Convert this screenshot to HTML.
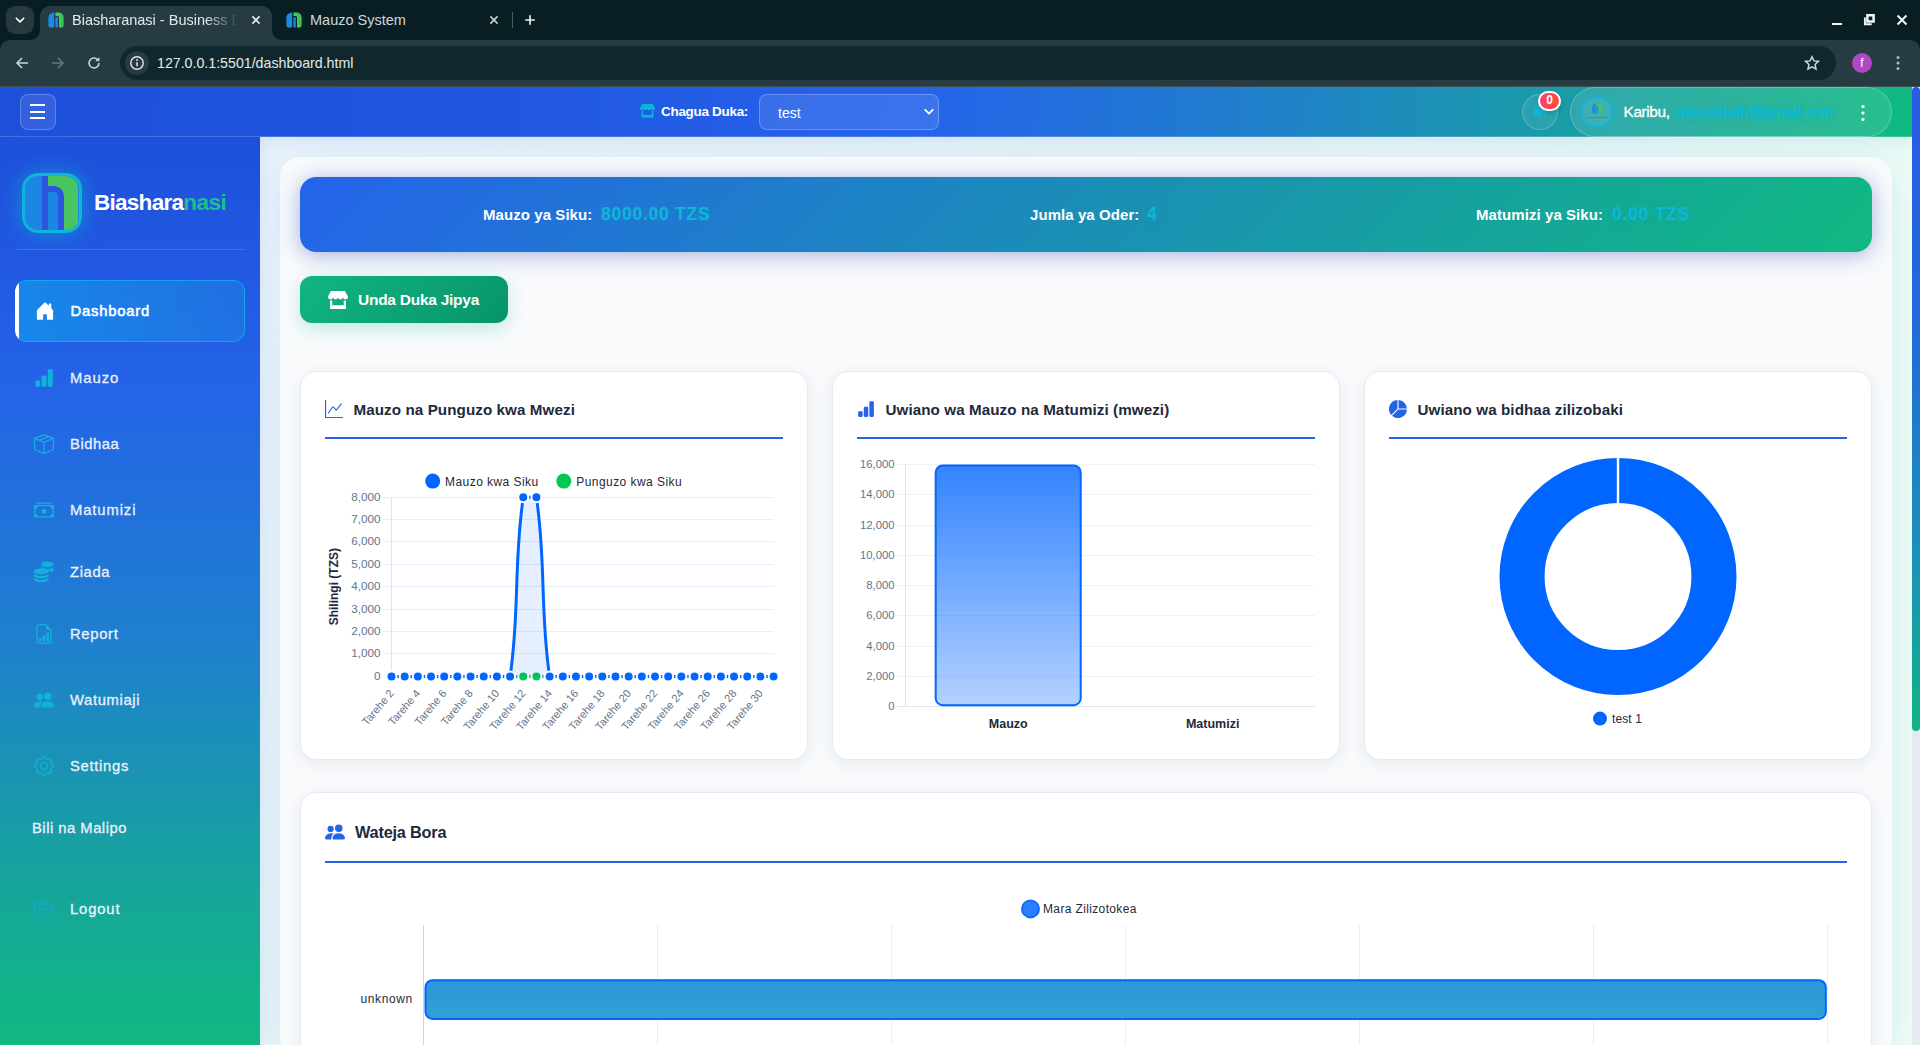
<!DOCTYPE html>
<html lang="sw">
<head>
<meta charset="utf-8">
<title>Biasharanasi - Business Dashboard</title>
<style>
*{box-sizing:border-box;margin:0;padding:0}
html,body{width:1920px;height:1045px;overflow:hidden;background:#0a1f24;font-family:"Liberation Sans",sans-serif}
.abs{position:absolute}
svg{display:block}
/* ---------- browser chrome ---------- */
#chrome{position:absolute;left:0;top:0;width:1920px;height:87px;background:#091e23;color:#dfe6e8;font-family:"Liberation Sans",sans-serif}
#toolbar{position:absolute;left:0;top:40px;width:1920px;height:46px;background:#263c42;border-radius:10px 10px 0 0}
#tbline{position:absolute;left:0;top:86px;width:1920px;height:1px;background:#3c4f54}
#tabsearch{position:absolute;left:6px;top:6px;width:28px;height:28px;border-radius:9px;background:#263a40}
#tab1{position:absolute;left:40px;top:6px;width:232px;height:35px;background:#263c42;border-radius:10px 10px 0 0}
#tab1:before,#tab1:after{content:"";position:absolute;bottom:1px;width:10px;height:10px;background:radial-gradient(circle at 0 0,rgba(0,0,0,0) 9.5px,#263c42 10.5px)}
#tab1:before{left:-10px}
#tab1:after{right:-10px;background:radial-gradient(circle at 100% 0,rgba(0,0,0,0) 9.5px,#263c42 10.5px)}
.tabtitle{position:absolute;top:12px;font-size:14.5px;white-space:nowrap;color:#e3e9ea;line-height:16px}
#urlbox{position:absolute;left:120px;top:46px;width:1716px;height:34px;border-radius:17px;background:#10282d}
#urlinfo{position:absolute;left:125px;top:51px;width:24px;height:24px;border-radius:12px;background:#263c42}
#url{position:absolute;left:157px;top:54px;font-size:14.2px;line-height:18px;color:#e3e9ea;white-space:nowrap}
/* ---------- page ---------- */
#page{position:absolute;left:0;top:87px;width:1912px;height:958px;overflow:hidden;background:linear-gradient(135deg,#eff5fe 0%,#eaf6f6 38%,#ebfcf4 66%,#ebfcf4 100%);font-family:"Liberation Sans",sans-serif;color:#1e293b}
#scroll{position:absolute;left:1912px;top:87px;width:8px;height:958px;background:#e6eaf3}
#thumb{position:absolute;left:0;top:0;width:8px;height:644px;border-radius:4px;background:linear-gradient(180deg,#2a5be6 0%,#2268dc 35%,#1b93b6 75%,#12b384 100%)}
#header{position:absolute;left:0;top:0;width:1912px;height:50px;background:linear-gradient(92deg,#1e4fda 0%,#2056e0 25%,#2563eb 48%,#1f83c6 68%,#18a39f 85%,#10b981 100%);border-bottom:1px solid rgba(255,255,255,.18);box-shadow:0 4px 18px rgba(37,99,235,.13)}
#sidebar{position:absolute;left:0;top:50px;width:260px;height:908px;background:linear-gradient(180deg,#1e50da 0%,#2157e1 12%,#2463e8 27%,#1f7fcf 55%,#17a29f 80%,#10b981 100%);box-shadow:4px 0 20px rgba(37,99,235,.11)}
#main{position:absolute;left:280px;top:70px;width:1612px;height:900px;border-radius:20px;background:#f8fafc;box-shadow:0 0 30px rgba(37,99,235,.10)}
.card{position:absolute;background:#fff;border:1px solid #e6ebf2;border-radius:16px;box-shadow:0 4px 18px rgba(30,41,80,.07)}
.ctitle{position:absolute;font-size:15.2px;font-weight:700;color:#1e293b;white-space:nowrap;line-height:20px;letter-spacing:.08px}
.cline{position:absolute;height:2px;background:#2563eb}
.nav{position:absolute;left:70px;font-size:14.8px;font-weight:400;-webkit-text-stroke:.3px #eaf1ff;color:#eaf1ff;white-space:nowrap;line-height:20px;letter-spacing:.3px}
.nico{position:absolute;left:34px;width:20px;height:20px;fill:#10b3d8}
.stl{font-size:15px;font-weight:700;color:#fff;line-height:20px;white-space:nowrap;letter-spacing:.07px}
.stv{font-size:17.5px;font-weight:700;color:#10b6d8;line-height:22px;white-space:nowrap;letter-spacing:.75px;text-shadow:0 0 10px rgba(6,182,212,.35)}
</style>
</head>
<body>
<!-- ================= BROWSER CHROME ================= -->
<div id="chrome">
  <div id="tabsearch"></div>
  <div id="tab1"></div>
  <div id="toolbar"></div>
  <div id="tbline"></div>
  <div id="urlbox"></div>
  <div id="urlinfo"></div>
  <div class="tabtitle" style="left:72px;width:166px;overflow:hidden;-webkit-mask-image:linear-gradient(90deg,#000 80%,transparent 100%);mask-image:linear-gradient(90deg,#000 80%,transparent 100%)">Biasharanasi - Business Dashboard</div>
  <div class="tabtitle" style="left:310px;color:#cdd7d9">Mauzo System</div>
  <div id="url">127.0.0.1:5501/dashboard.html</div>
  
  <svg class="abs" style="left:14px;top:15px" width="12" height="10" viewBox="0 0 12 10"><path d="M2.300 3.200l3.700 3.700 3.700-3.700" fill="none" stroke="#fff" stroke-width="1.6" stroke-linecap="round" stroke-linejoin="round"/></svg>
  <svg class="abs" style="left:48px;top:12px" width="16" height="16" viewBox="0 0 16 16"><path d="M6.2 0.6C3 0.6 0.4 2.9 0.4 6v7.2c0 1.4 1.2 2.4 2.6 2.4h3.2z" fill="#1b8ae3"/><path d="M7.4 5.2h2.4v10.4H8.9c-0.9 0-1.5-.6-1.5-1.4z" fill="#1b8ae3"/><path d="M7.4 0.6h3.2c2.9 0 5 2.2 5 5v7.6c0 1.4-1 2.4-2.4 2.4H11V5.6c0-.9-.6-1.6-1.5-1.6H7.4z" fill="#3dcb5c"/><path d="M10.6 2.2c1.9 0 3.3 1.4 3.3 3.3v10" fill="none" stroke="#2fb44d" stroke-width=".7"/></svg>
  <svg class="abs" style="left:286px;top:12px" width="16" height="16" viewBox="0 0 16 16"><path d="M6.2 0.6C3 0.6 0.4 2.9 0.4 6v7.2c0 1.4 1.2 2.4 2.6 2.4h3.2z" fill="#1b8ae3"/><path d="M7.4 5.2h2.4v10.4H8.9c-0.9 0-1.5-.6-1.5-1.4z" fill="#1b8ae3"/><path d="M7.4 0.6h3.2c2.9 0 5 2.2 5 5v7.6c0 1.4-1 2.4-2.4 2.4H11V5.6c0-.9-.6-1.6-1.5-1.6H7.4z" fill="#3dcb5c"/><path d="M10.6 2.2c1.9 0 3.3 1.4 3.3 3.3v10" fill="none" stroke="#2fb44d" stroke-width=".7"/></svg>
  <svg class="abs" style="left:250.300px;top:14px" width="12" height="12" viewBox="0 0 12 12"><path d="M3 3l6 6M9 3l-6 6" stroke="#e8eef0" stroke-width="1.7" stroke-linecap="square"/></svg>
  <svg class="abs" style="left:487.800px;top:14px" width="12" height="12" viewBox="0 0 12 12"><path d="M3 3l6 6M9 3l-6 6" stroke="#cfd9dc" stroke-width="1.6" stroke-linecap="square"/></svg>
  <div class="abs" style="left:512px;top:12px;width:1px;height:16px;background:#4a5d62"></div>
  <svg class="abs" style="left:523px;top:13px" width="14" height="14" viewBox="0 0 14 14"><path d="M7 2.200v9.600M2.200 7h9.600" stroke="#e8eef0" stroke-width="1.7"/></svg>
  <!-- back / forward / reload -->
  <svg class="abs" style="left:14px;top:55px" width="16" height="16" viewBox="0 0 16 16"><path d="M14 8H3M8 3L3 8l5 5" fill="none" stroke="#c3d7dc" stroke-width="1.6" stroke-linejoin="miter"/></svg>
  <svg class="abs" style="left:50px;top:55px" width="16" height="16" viewBox="0 0 16 16"><path d="M2 8h11M8 3l5 5-5 5" fill="none" stroke="#61797f" stroke-width="1.6"/></svg>
  <svg class="abs" style="left:86px;top:55px" width="16" height="16" viewBox="0 0 16 16"><path d="M13 8a5 5 0 1 1-1.6-3.7" fill="none" stroke="#c3d7dc" stroke-width="1.6"/><path d="M13.4 2v4.2H9.2z" fill="#c3d7dc"/></svg>
  <svg class="abs" style="left:129px;top:55px" width="16" height="16" viewBox="0 0 16 16"><circle cx="8" cy="8" r="6.2" fill="none" stroke="#e3e9ea" stroke-width="1.4"/><path d="M8 7.2v4" stroke="#e3e9ea" stroke-width="1.5"/><circle cx="8" cy="5" r=".95" fill="#e3e9ea"/></svg>
  <!-- star / avatar / menu -->
  <svg class="abs" style="left:1803px;top:54px" width="18" height="18" viewBox="0 0 24 24"><path d="M12 3.6l2.6 5.6 6 .7-4.5 4.1 1.2 6L12 17l-5.3 3 1.2-6-4.5-4.100 6-.7z" fill="none" stroke="#c3d7dc" stroke-width="2" stroke-linejoin="miter"/></svg>
  <div class="abs" style="left:1852px;top:53px;width:20px;height:20px;border-radius:10px;background:#ae48c4;color:#fff;font-size:12px;line-height:20px;text-align:center">f</div>
  <svg class="abs" style="left:1894px;top:54px" width="8" height="18" viewBox="0 0 8 18"><circle cx="4" cy="3.5" r="1.5" fill="#a5bfc5"/><circle cx="4" cy="9" r="1.5" fill="#a5bfc5"/><circle cx="4" cy="14.600" r="1.5" fill="#a5bfc5"/></svg>
  <!-- window controls -->
  <div class="abs" style="left:1832px;top:23px;width:10px;height:2px;background:#f1f5f6"></div>
  <svg class="abs" style="left:1863px;top:14px" width="12" height="12" viewBox="0 0 12 12"><path d="M4.4 1.3h6.200v6.200H4.4z" fill="none" stroke="#f1f5f6" stroke-width="2.500"/><path d="M1.900 3.400v6.800h6.800" fill="none" stroke="#f1f5f6" stroke-width="1.9"/></svg>
  <svg class="abs" style="left:1896px;top:14px" width="12" height="12" viewBox="0 0 12 12"><path d="M1.5 1.5l9 9M10.5 1.5l-9 9" stroke="#f1f5f6" stroke-width="2"/></svg>

</div>

<!-- ================= PAGE ================= -->
<div id="page">
  <div id="main">
    
    <!-- stats bar (coords relative to #main: page x-280, y-157) -->
    <div class="abs" style="left:20px;top:20px;width:1572px;height:75px;border-radius:16px;background:linear-gradient(135deg,#2563eb 0%,#10b981 100%);box-shadow:0 3px 22px rgba(30,64,175,.385)"></div>
    <div class="stl abs" style="left:203px;top:48px">Mauzo ya Siku:</div><div class="stv abs" style="left:321px;top:46px">8000.00 TZS</div>
    <div class="stl abs" style="left:750px;top:48px">Jumla ya Oder:</div><div class="stv abs" style="left:867px;top:46px">4</div>
    <div class="stl abs" style="left:1196px;top:48px">Matumizi ya Siku:</div><div class="stv abs" style="left:1332px;top:46px">0.00 TZS</div>
    <!-- button -->
    <div class="abs" style="left:20px;top:119px;width:208px;height:47px;border-radius:12px;background:linear-gradient(135deg,#12b584 0%,#079467 100%);box-shadow:0 6px 18px rgba(16,185,129,.24)"></div>
    <svg class="abs" style="left:48px;top:133.700px;fill:#fff" width="20" height="18.400" viewBox="0 0 20 18.400"><path d="M2.800 0H16.900L20 5.600v.700a2.500 2.100 0 0 1-5 0a2.500 2.100 0 0 1-5 0a2.500 2.100 0 0 1-5 0a2.500 2.100 0 0 1-5 0V5.600zM2 9.500h2.250v4.700h11.500V9.500H18v7.400a1.500 1.500 0 0 1-1.500 1.500h-13A1.500 1.500 0 0 1 2 16.900z"/></svg>
    <div class="abs" style="left:78px;top:133px;font-size:15.500px;font-weight:700;color:#fff;line-height:20px;white-space:nowrap;letter-spacing:-.26px">Unda Duka Jipya</div>
    <div class="card" style="left:20.0px;top:214px;width:508px;height:389px"></div>
    <svg class="abs" style="left:45.0px;top:243px;fill:#2563eb" width="18" height="18" viewBox="0 0 16 16"><path fill-rule="evenodd" d="M0 0h1v15h15v1H0zm14.817 3.113a.500.500 0 0 1 .070.704l-4.500 5.500a.500.500 0 0 1-.740.037L7.060 6.767l-3.656 5.027a.500.500 0 0 1-.808-.588l4-5.500a.500.500 0 0 1 .758-.060l2.609 2.610 4.150-5.073a.500.500 0 0 1 .704-.070"/></svg>
    <div class="ctitle" style="left:73.5px;top:243.1px">Mauzo na Punguzo kwa Mwezi</div>
    <div class="cline" style="left:45.0px;top:280px;width:458px"></div>
    <div class="card" style="left:552.0px;top:214px;width:508px;height:389px"></div>
    <svg class="abs" style="left:577.0px;top:243px;fill:#2563eb" width="18" height="18" viewBox="0 0 16 16"><path d="M1 11a1 1 0 0 1 1-1h2a1 1 0 0 1 1 1v3a1 1 0 0 1-1 1H2a1 1 0 0 1-1-1zm5-4a1 1 0 0 1 1-1h2a1 1 0 0 1 1 1v7a1 1 0 0 1-1 1H7a1 1 0 0 1-1-1zm5-5a1 1 0 0 1 1-1h2a1 1 0 0 1 1 1v12a1 1 0 0 1-1 1h-2a1 1 0 0 1-1-1z"/></svg>
    <div class="ctitle" style="left:605.5px;top:243.1px">Uwiano wa Mauzo na Matumizi (mwezi)</div>
    <div class="cline" style="left:577.0px;top:280px;width:458px"></div>
    <div class="card" style="left:1084.0px;top:214px;width:508px;height:389px"></div>
    <svg class="abs" style="left:1109.0px;top:243px;fill:#2563eb" width="18" height="18" viewBox="0 0 16 16"><path d="M15.985 8.500H8.207l-5.500 5.500a8 8 0 0 0 13.277-5.500zM2 13.292A8 8 0 0 1 7.500.015v7.778zM8.500.015V7.500h7.485A8 8 0 0 0 8.500.015"/></svg>
    <div class="ctitle" style="left:1137.5px;top:243.1px">Uwiano wa bidhaa zilizobaki</div>
    <div class="cline" style="left:1109.0px;top:280px;width:458px"></div>
    <div class="card" style="left:20.0px;top:635.0px;width:1572px;height:300px"></div>
    <svg class="abs" style="left:45.0px;top:665px;fill:#2563eb" width="20" height="20" viewBox="0 0 16 16"><path d="M7 14s-1 0-1-1 1-4 5-4 5 3 5 4-1 1-1 1zm4-6a3 3 0 1 0 0-6 3 3 0 0 0 0 6m-5.784 6A2.240 2.240 0 0 1 5 13c0-1.355.680-2.750 1.936-3.720A6.300 6.300 0 0 0 5 9c-4 0-5 3-5 4s1 1 1 1zM4.500 8a2.500 2.500 0 1 0 0-5 2.500 2.500 0 0 0 0 5"/></svg>
    <div class="ctitle" style="left:75.0px;top:665px;font-size:16.3px;letter-spacing:-.2px">Wateja Bora</div>
    <div class="cline" style="left:45.0px;top:704.0px;width:1522px"></div>
    <svg class="abs" style="left:-280px;top:-157px;font-family:'Liberation Sans',sans-serif" width="1920" height="1045" viewBox="0 0 1920 1045">
<defs><linearGradient id="gbar" x1="0" y1="0" x2="0" y2="1"><stop offset="0" stop-color="#0066ff" stop-opacity=".8"/><stop offset="1" stop-color="#0066ff" stop-opacity=".3"/></linearGradient>
<linearGradient id="gh" x1="0" y1="0" x2="0" y2="1"><stop offset="0" stop-color="#2d96d9"/><stop offset="1" stop-color="#30a1d1"/></linearGradient></defs>
<g id="c1">
<path d="M383.500 676.50 H774.10" stroke="#e4eeff" stroke-width="1" fill="none"/>
<path d="M383.500 653.50 H774.10" stroke="#e4eeff" stroke-width="1" fill="none"/>
<path d="M383.500 631.50 H774.10" stroke="#e4eeff" stroke-width="1" fill="none"/>
<path d="M383.500 609.50 H774.10" stroke="#e4eeff" stroke-width="1" fill="none"/>
<path d="M383.500 586.50 H774.10" stroke="#e4eeff" stroke-width="1" fill="none"/>
<path d="M383.500 564.50 H774.10" stroke="#e4eeff" stroke-width="1" fill="none"/>
<path d="M383.500 541.50 H774.10" stroke="#e4eeff" stroke-width="1" fill="none"/>
<path d="M383.500 519.50 H774.10" stroke="#e4eeff" stroke-width="1" fill="none"/>
<path d="M383.500 497.50 H774.10" stroke="#e4eeff" stroke-width="1" fill="none"/>
<path d="M391.50 497.05 V676.30" stroke="#e3e4e8" stroke-width="1"/>
<text x="380.500" y="679.80" font-size="11.700" fill="#64748b" text-anchor="end">0</text>
<text x="380.500" y="657.39" font-size="11.700" fill="#64748b" text-anchor="end">1,000</text>
<text x="380.500" y="634.99" font-size="11.700" fill="#64748b" text-anchor="end">2,000</text>
<text x="380.500" y="612.58" font-size="11.700" fill="#64748b" text-anchor="end">3,000</text>
<text x="380.500" y="590.17" font-size="11.700" fill="#64748b" text-anchor="end">4,000</text>
<text x="380.500" y="567.77" font-size="11.700" fill="#64748b" text-anchor="end">5,000</text>
<text x="380.500" y="545.36" font-size="11.700" fill="#64748b" text-anchor="end">6,000</text>
<text x="380.500" y="522.96" font-size="11.700" fill="#64748b" text-anchor="end">7,000</text>
<text x="380.500" y="500.55" font-size="11.700" fill="#64748b" text-anchor="end">8,000</text>
<text transform="translate(338.100 586.700) rotate(-90)" font-size="12" font-weight="700" fill="#1e293b" text-anchor="middle">Shilingi (TZS)</text>
<path d="M391.50 676.60 C396.77 676.60 399.41 676.60 404.68 676.60 C409.95 676.60 412.58 676.60 417.85 676.60 C423.12 676.60 425.76 676.60 431.03 676.60 C436.30 676.60 438.93 676.60 444.20 676.60 C449.47 676.60 452.11 676.60 457.38 676.60 C462.65 676.60 465.28 676.60 470.56 676.60 C475.83 676.60 478.46 676.60 483.73 676.60 C489.00 676.60 491.64 676.60 496.91 676.60 C502.18 676.60 504.81 676.60 510.08 676.60 C515.35 676.60 517.99 676.60 523.26 676.60 C528.53 676.60 531.16 676.60 536.43 676.60 C541.70 676.60 544.34 676.60 549.61 676.60 C554.88 676.60 557.52 676.60 562.79 676.60 C568.06 676.60 570.69 676.60 575.96 676.60 C581.23 676.60 583.87 676.60 589.14 676.60 C594.41 676.60 597.04 676.60 602.31 676.60 C607.58 676.60 610.22 676.60 615.49 676.60 C620.76 676.60 623.40 676.60 628.67 676.60 C633.94 676.60 636.57 676.60 641.84 676.60 C647.11 676.60 649.75 676.60 655.02 676.60 C660.29 676.60 662.92 676.60 668.19 676.60 C673.46 676.60 676.10 676.60 681.37 676.60 C686.64 676.60 689.27 676.60 694.54 676.60 C699.82 676.60 702.45 676.60 707.72 676.60 C712.99 676.60 715.63 676.60 720.90 676.60 C726.17 676.60 728.80 676.60 734.07 676.60 C739.34 676.60 741.98 676.60 747.25 676.60 C752.52 676.60 755.15 676.60 760.42 676.60 C765.69 676.60 768.33 676.60 773.60 676.60" fill="none" stroke="#00c851" stroke-width="3"/>
<circle cx="391.50" cy="676.60" r="5" fill="#00c851" stroke="#fff" stroke-width="2"/>
<circle cx="404.68" cy="676.60" r="5" fill="#00c851" stroke="#fff" stroke-width="2"/>
<circle cx="417.85" cy="676.60" r="5" fill="#00c851" stroke="#fff" stroke-width="2"/>
<circle cx="431.03" cy="676.60" r="5" fill="#00c851" stroke="#fff" stroke-width="2"/>
<circle cx="444.20" cy="676.60" r="5" fill="#00c851" stroke="#fff" stroke-width="2"/>
<circle cx="457.38" cy="676.60" r="5" fill="#00c851" stroke="#fff" stroke-width="2"/>
<circle cx="470.56" cy="676.60" r="5" fill="#00c851" stroke="#fff" stroke-width="2"/>
<circle cx="483.73" cy="676.60" r="5" fill="#00c851" stroke="#fff" stroke-width="2"/>
<circle cx="496.91" cy="676.60" r="5" fill="#00c851" stroke="#fff" stroke-width="2"/>
<circle cx="510.08" cy="676.60" r="5" fill="#00c851" stroke="#fff" stroke-width="2"/>
<circle cx="523.26" cy="676.60" r="5" fill="#00c851" stroke="#fff" stroke-width="2"/>
<circle cx="536.43" cy="676.60" r="5" fill="#00c851" stroke="#fff" stroke-width="2"/>
<circle cx="549.61" cy="676.60" r="5" fill="#00c851" stroke="#fff" stroke-width="2"/>
<circle cx="562.79" cy="676.60" r="5" fill="#00c851" stroke="#fff" stroke-width="2"/>
<circle cx="575.96" cy="676.60" r="5" fill="#00c851" stroke="#fff" stroke-width="2"/>
<circle cx="589.14" cy="676.60" r="5" fill="#00c851" stroke="#fff" stroke-width="2"/>
<circle cx="602.31" cy="676.60" r="5" fill="#00c851" stroke="#fff" stroke-width="2"/>
<circle cx="615.49" cy="676.60" r="5" fill="#00c851" stroke="#fff" stroke-width="2"/>
<circle cx="628.67" cy="676.60" r="5" fill="#00c851" stroke="#fff" stroke-width="2"/>
<circle cx="641.84" cy="676.60" r="5" fill="#00c851" stroke="#fff" stroke-width="2"/>
<circle cx="655.02" cy="676.60" r="5" fill="#00c851" stroke="#fff" stroke-width="2"/>
<circle cx="668.19" cy="676.60" r="5" fill="#00c851" stroke="#fff" stroke-width="2"/>
<circle cx="681.37" cy="676.60" r="5" fill="#00c851" stroke="#fff" stroke-width="2"/>
<circle cx="694.54" cy="676.60" r="5" fill="#00c851" stroke="#fff" stroke-width="2"/>
<circle cx="707.72" cy="676.60" r="5" fill="#00c851" stroke="#fff" stroke-width="2"/>
<circle cx="720.90" cy="676.60" r="5" fill="#00c851" stroke="#fff" stroke-width="2"/>
<circle cx="734.07" cy="676.60" r="5" fill="#00c851" stroke="#fff" stroke-width="2"/>
<circle cx="747.25" cy="676.60" r="5" fill="#00c851" stroke="#fff" stroke-width="2"/>
<circle cx="760.42" cy="676.60" r="5" fill="#00c851" stroke="#fff" stroke-width="2"/>
<circle cx="773.60" cy="676.60" r="5" fill="#00c851" stroke="#fff" stroke-width="2"/>
<path d="M391.50 676.60 C396.77 676.60 399.41 676.60 404.68 676.60 C409.95 676.60 412.58 676.60 417.85 676.60 C423.12 676.60 425.76 676.60 431.03 676.60 C436.30 676.60 438.93 676.60 444.20 676.60 C449.47 676.60 452.11 676.60 457.38 676.60 C462.65 676.60 465.28 676.60 470.56 676.60 C475.83 676.60 478.46 676.60 483.73 676.60 C489.00 676.60 491.64 676.60 496.91 676.60 C502.18 676.60 509.36 676.60 510.08 676.60 C519.90 609.78 513.44 564.12 523.26 497.30 C523.98 497.30 535.71 497.30 536.43 497.30 C546.26 564.12 539.79 609.78 549.61 676.60 C550.33 676.60 557.52 676.60 562.79 676.60 C568.06 676.60 570.69 676.60 575.96 676.60 C581.23 676.60 583.87 676.60 589.14 676.60 C594.41 676.60 597.04 676.60 602.31 676.60 C607.58 676.60 610.22 676.60 615.49 676.60 C620.76 676.60 623.40 676.60 628.67 676.60 C633.94 676.60 636.57 676.60 641.84 676.60 C647.11 676.60 649.75 676.60 655.02 676.60 C660.29 676.60 662.92 676.60 668.19 676.60 C673.46 676.60 676.10 676.60 681.37 676.60 C686.64 676.60 689.27 676.60 694.54 676.60 C699.82 676.60 702.45 676.60 707.72 676.60 C712.99 676.60 715.63 676.60 720.90 676.60 C726.17 676.60 728.80 676.60 734.07 676.60 C739.34 676.60 741.98 676.60 747.25 676.60 C752.52 676.60 755.15 676.60 760.42 676.60 C765.69 676.60 768.33 676.60 773.60 676.60 L773.60 676.60 L391.50 676.60 Z" fill="#0066ff" fill-opacity=".1" stroke="none"/>
<path d="M391.50 676.60 C396.77 676.60 399.41 676.60 404.68 676.60 C409.95 676.60 412.58 676.60 417.85 676.60 C423.12 676.60 425.76 676.60 431.03 676.60 C436.30 676.60 438.93 676.60 444.20 676.60 C449.47 676.60 452.11 676.60 457.38 676.60 C462.65 676.60 465.28 676.60 470.56 676.60 C475.83 676.60 478.46 676.60 483.73 676.60 C489.00 676.60 491.64 676.60 496.91 676.60 C502.18 676.60 509.36 676.60 510.08 676.60 C519.90 609.78 513.44 564.12 523.26 497.30 C523.98 497.30 535.71 497.30 536.43 497.30 C546.26 564.12 539.79 609.78 549.61 676.60 C550.33 676.60 557.52 676.60 562.79 676.60 C568.06 676.60 570.69 676.60 575.96 676.60 C581.23 676.60 583.87 676.60 589.14 676.60 C594.41 676.60 597.04 676.60 602.31 676.60 C607.58 676.60 610.22 676.60 615.49 676.60 C620.76 676.60 623.40 676.60 628.67 676.60 C633.94 676.60 636.57 676.60 641.84 676.60 C647.11 676.60 649.75 676.60 655.02 676.60 C660.29 676.60 662.92 676.60 668.19 676.60 C673.46 676.60 676.10 676.60 681.37 676.60 C686.64 676.60 689.27 676.60 694.54 676.60 C699.82 676.60 702.45 676.60 707.72 676.60 C712.99 676.60 715.63 676.60 720.90 676.60 C726.17 676.60 728.80 676.60 734.07 676.60 C739.34 676.60 741.98 676.60 747.25 676.60 C752.52 676.60 755.15 676.60 760.42 676.60 C765.69 676.60 768.33 676.60 773.60 676.60" fill="none" stroke="#0066ff" stroke-width="3"/>
<circle cx="391.50" cy="676.60" r="5" fill="#0066ff" stroke="#fff" stroke-width="2"/>
<circle cx="404.68" cy="676.60" r="5" fill="#0066ff" stroke="#fff" stroke-width="2"/>
<circle cx="417.85" cy="676.60" r="5" fill="#0066ff" stroke="#fff" stroke-width="2"/>
<circle cx="431.03" cy="676.60" r="5" fill="#0066ff" stroke="#fff" stroke-width="2"/>
<circle cx="444.20" cy="676.60" r="5" fill="#0066ff" stroke="#fff" stroke-width="2"/>
<circle cx="457.38" cy="676.60" r="5" fill="#0066ff" stroke="#fff" stroke-width="2"/>
<circle cx="470.56" cy="676.60" r="5" fill="#0066ff" stroke="#fff" stroke-width="2"/>
<circle cx="483.73" cy="676.60" r="5" fill="#0066ff" stroke="#fff" stroke-width="2"/>
<circle cx="496.91" cy="676.60" r="5" fill="#0066ff" stroke="#fff" stroke-width="2"/>
<circle cx="510.08" cy="676.60" r="5" fill="#0066ff" stroke="#fff" stroke-width="2"/>
<circle cx="523.26" cy="497.30" r="5" fill="#0066ff" stroke="#fff" stroke-width="2"/>
<circle cx="536.43" cy="497.30" r="5" fill="#0066ff" stroke="#fff" stroke-width="2"/>
<circle cx="549.61" cy="676.60" r="5" fill="#0066ff" stroke="#fff" stroke-width="2"/>
<circle cx="562.79" cy="676.60" r="5" fill="#0066ff" stroke="#fff" stroke-width="2"/>
<circle cx="575.96" cy="676.60" r="5" fill="#0066ff" stroke="#fff" stroke-width="2"/>
<circle cx="589.14" cy="676.60" r="5" fill="#0066ff" stroke="#fff" stroke-width="2"/>
<circle cx="602.31" cy="676.60" r="5" fill="#0066ff" stroke="#fff" stroke-width="2"/>
<circle cx="615.49" cy="676.60" r="5" fill="#0066ff" stroke="#fff" stroke-width="2"/>
<circle cx="628.67" cy="676.60" r="5" fill="#0066ff" stroke="#fff" stroke-width="2"/>
<circle cx="641.84" cy="676.60" r="5" fill="#0066ff" stroke="#fff" stroke-width="2"/>
<circle cx="655.02" cy="676.60" r="5" fill="#0066ff" stroke="#fff" stroke-width="2"/>
<circle cx="668.19" cy="676.60" r="5" fill="#0066ff" stroke="#fff" stroke-width="2"/>
<circle cx="681.37" cy="676.60" r="5" fill="#0066ff" stroke="#fff" stroke-width="2"/>
<circle cx="694.54" cy="676.60" r="5" fill="#0066ff" stroke="#fff" stroke-width="2"/>
<circle cx="707.72" cy="676.60" r="5" fill="#0066ff" stroke="#fff" stroke-width="2"/>
<circle cx="720.90" cy="676.60" r="5" fill="#0066ff" stroke="#fff" stroke-width="2"/>
<circle cx="734.07" cy="676.60" r="5" fill="#0066ff" stroke="#fff" stroke-width="2"/>
<circle cx="747.25" cy="676.60" r="5" fill="#0066ff" stroke="#fff" stroke-width="2"/>
<circle cx="760.42" cy="676.60" r="5" fill="#0066ff" stroke="#fff" stroke-width="2"/>
<circle cx="773.60" cy="676.60" r="5" fill="#0066ff" stroke="#fff" stroke-width="2"/>
<circle cx="432.700" cy="481.100" r="7.500" fill="#0066ff"/><text x="445" y="485.500" font-size="12" letter-spacing=".45" fill="#1e293b">Mauzo kwa Siku</text>
<circle cx="563.800" cy="481.100" r="7.500" fill="#00c851"/><text x="576.200" y="485.500" font-size="12" letter-spacing=".45" fill="#1e293b">Punguzo kwa Siku</text>
<text transform="translate(394.50 693.500) rotate(-50)" font-size="11" fill="#64748b" text-anchor="end">Tarehe 2</text>
<text transform="translate(420.85 693.500) rotate(-50)" font-size="11" fill="#64748b" text-anchor="end">Tarehe 4</text>
<text transform="translate(447.20 693.500) rotate(-50)" font-size="11" fill="#64748b" text-anchor="end">Tarehe 6</text>
<text transform="translate(473.56 693.500) rotate(-50)" font-size="11" fill="#64748b" text-anchor="end">Tarehe 8</text>
<text transform="translate(499.91 693.500) rotate(-50)" font-size="11" fill="#64748b" text-anchor="end">Tarehe 10</text>
<text transform="translate(526.26 693.500) rotate(-50)" font-size="11" fill="#64748b" text-anchor="end">Tarehe 12</text>
<text transform="translate(552.61 693.500) rotate(-50)" font-size="11" fill="#64748b" text-anchor="end">Tarehe 14</text>
<text transform="translate(578.96 693.500) rotate(-50)" font-size="11" fill="#64748b" text-anchor="end">Tarehe 16</text>
<text transform="translate(605.31 693.500) rotate(-50)" font-size="11" fill="#64748b" text-anchor="end">Tarehe 18</text>
<text transform="translate(631.67 693.500) rotate(-50)" font-size="11" fill="#64748b" text-anchor="end">Tarehe 20</text>
<text transform="translate(658.02 693.500) rotate(-50)" font-size="11" fill="#64748b" text-anchor="end">Tarehe 22</text>
<text transform="translate(684.37 693.500) rotate(-50)" font-size="11" fill="#64748b" text-anchor="end">Tarehe 24</text>
<text transform="translate(710.72 693.500) rotate(-50)" font-size="11" fill="#64748b" text-anchor="end">Tarehe 26</text>
<text transform="translate(737.07 693.500) rotate(-50)" font-size="11" fill="#64748b" text-anchor="end">Tarehe 28</text>
<text transform="translate(763.42 693.500) rotate(-50)" font-size="11" fill="#64748b" text-anchor="end">Tarehe 30</text>
</g>
<g id="c2">
<path d="M897.500 706.50 H1315.00" stroke="#dfe6f2" stroke-width="1"/>
<path d="M897.500 676.50 H1315.00" stroke="#edf2fc" stroke-width="1"/>
<path d="M897.500 646.50 H1315.00" stroke="#edf2fc" stroke-width="1"/>
<path d="M897.500 615.50 H1315.00" stroke="#edf2fc" stroke-width="1"/>
<path d="M897.500 585.50 H1315.00" stroke="#edf2fc" stroke-width="1"/>
<path d="M897.500 555.50 H1315.00" stroke="#edf2fc" stroke-width="1"/>
<path d="M897.500 525.50 H1315.00" stroke="#edf2fc" stroke-width="1"/>
<path d="M897.500 494.50 H1315.00" stroke="#edf2fc" stroke-width="1"/>
<path d="M897.500 464.50 H1315.00" stroke="#edf2fc" stroke-width="1"/>
<path d="M905.50 464.60 V706.60" stroke="#e3e4e8" stroke-width="1"/>
<text x="894.500" y="710.20" font-size="11.300" fill="#64748b" text-anchor="end">0</text>
<text x="894.500" y="679.95" font-size="11.300" fill="#64748b" text-anchor="end">2,000</text>
<text x="894.500" y="649.70" font-size="11.300" fill="#64748b" text-anchor="end">4,000</text>
<text x="894.500" y="619.45" font-size="11.300" fill="#64748b" text-anchor="end">6,000</text>
<text x="894.500" y="589.20" font-size="11.300" fill="#64748b" text-anchor="end">8,000</text>
<text x="894.500" y="558.95" font-size="11.300" fill="#64748b" text-anchor="end">10,000</text>
<text x="894.500" y="528.70" font-size="11.300" fill="#64748b" text-anchor="end">12,000</text>
<text x="894.500" y="498.45" font-size="11.300" fill="#64748b" text-anchor="end">14,000</text>
<text x="894.500" y="468.20" font-size="11.300" fill="#64748b" text-anchor="end">16,000</text>
<rect x="935.700" y="465.400" width="145" height="239.800" rx="7" fill="url(#gbar)" stroke="#0066ff" stroke-width="2"/>
<text x="1008.300" y="728" font-size="12.500" font-weight="700" fill="#1e293b" text-anchor="middle">Mauzo</text>
<text x="1212.700" y="728" font-size="12.500" font-weight="700" fill="#1e293b" text-anchor="middle">Matumizi</text>
</g>
<g id="c3">
<circle cx="1618" cy="576.500" r="95.950" fill="none" stroke="#0066ff" stroke-width="45.100"/>
<path d="M1618 456 V505" stroke="#fff" stroke-width="2.400"/>
<circle cx="1600" cy="718.600" r="7" fill="#0066ff"/><text x="1612" y="722.800" font-size="12" letter-spacing=".1" fill="#1e293b">test 1</text>
</g>
<g id="c4">
<path d="M423.50 925 V1045" stroke="#cdd6e2" stroke-width="1"/>
<path d="M657.50 925 V1045" stroke="#e6efff" stroke-width="1"/>
<path d="M891.50 925 V1045" stroke="#e6efff" stroke-width="1"/>
<path d="M1125.50 925 V1045" stroke="#e6efff" stroke-width="1"/>
<path d="M1359.50 925 V1045" stroke="#e6efff" stroke-width="1"/>
<path d="M1593.50 925 V1045" stroke="#e6efff" stroke-width="1"/>
<path d="M1827.50 925 V1045" stroke="#e6efff" stroke-width="1"/>
<rect x="425.500" y="980.200" width="1400.300" height="38.700" rx="7" fill="url(#gh)" stroke="#0066ff" stroke-width="2"/>
<text x="412.800" y="1002.700" font-size="12" letter-spacing=".6" fill="#1e293b" text-anchor="end">unknown</text>
<circle cx="1030.500" cy="908.900" r="8.500" fill="#2b7fff" stroke="#0d6efd" stroke-width="2"/><text x="1043" y="913.100" font-size="12" letter-spacing=".36" fill="#1e293b">Mara Zilizotokea</text>
</g>
</svg>

  </div>
  <div id="sidebar">
    
    <div class="abs" style="left:22px;top:36px;width:60px;height:60px;border-radius:16px;border:3px solid #10b4d6;background:#1c86e4;overflow:hidden;box-shadow:0 0 22px rgba(6,182,212,.6)"><div class="abs" style="left:22.900px;top:0;width:30.500px;height:53.500px;background:#4ac562;border-radius:0 13px 3px 0"></div><div class="abs" style="left:16.900px;top:0;width:6px;height:54px;background:#2a55dc"></div><div class="abs" style="left:22.900px;top:9.600px;width:16.100px;height:45px;background:#1c86e4;border-top:6px solid #2a55dc;border-right:6px solid #2a55dc;border-radius:0 10px 0 0"></div></div>
    <div class="abs" style="left:94px;top:52px;font-size:22.600px;font-weight:700;color:#fff;line-height:27px;white-space:nowrap;letter-spacing:-.78px">Biashara<span style="color:#19c08d;letter-spacing:-.55px">nasi</span></div>
    <div class="abs" style="left:15px;top:112px;width:230px;height:1px;background:rgba(255,255,255,.16)"></div>
    <div class="abs" style="left:15px;top:143px;width:230px;height:62px;border-radius:12px;background:linear-gradient(90deg,rgba(20,150,235,.74),rgba(32,132,224,.5));border:1px solid rgba(20,180,240,.7);"></div><div class="abs" style="left:15px;top:143px;width:230px;height:62px;border-radius:12px;overflow:hidden"><div class="abs" style="left:0;top:0;width:4.200px;height:62px;background:#fff"></div></div>
    <svg class="nico" style="top:164px;left:35px;fill:#fff" viewBox="0 0 16 16"><path d="M6.500 14.500v-3.505c0-.245.250-.495.500-.495h2c.250 0 .500.250.500.500v3.500a.500.500 0 0 0 .500.500h4a.500.500 0 0 0 .500-.500v-7a.500.500 0 0 0-.146-.354L13 5.793V2.500a.500.500 0 0 0-.500-.500h-1a.500.500 0 0 0-.500.500v1.293L8.354 1.146a.500.500 0 0 0-.708 0l-6 6A.500.500 0 0 0 1.500 7.500v7a.500.500 0 0 0 .500.500h4a.500.500 0 0 0 .500-.500"/></svg>
    <div class="nav" style="top:164.25px;left:70.5px;-webkit-text-stroke:.55px #fff;color:#fff;letter-spacing:0.80px">Dashboard</div>
    <svg class="nico" style="top:231px;fill:#10b3d8" viewBox="0 0 16 16"><path d="M1 11a1 1 0 0 1 1-1h2a1 1 0 0 1 1 1v3a1 1 0 0 1-1 1H2a1 1 0 0 1-1-1zm5-4a1 1 0 0 1 1-1h2a1 1 0 0 1 1 1v7a1 1 0 0 1-1 1H7a1 1 0 0 1-1-1zm5-5a1 1 0 0 1 1-1h2a1 1 0 0 1 1 1v12a1 1 0 0 1-1 1h-2a1 1 0 0 1-1-1z"/></svg>
    <div class="nav" style="top:231.25px;left:70px;letter-spacing:0.95px">Mauzo</div>
    <svg class="nico" style="top:297px;fill:#10b3d8" viewBox="0 0 16 16"><path d="M8.186 1.113a.500.500 0 0 0-.372 0L1.846 3.500l2.404.961L10.404 2zm3.564 1.426L5.596 5 8 5.961 14.154 3.500zm3.250 1.700-6.500 2.600v7.922l6.500-2.600V4.240zM7.500 14.762V6.838L1 4.239v7.923zM7.443.184a1.500 1.500 0 0 1 1.114 0l7.129 2.852A.500.500 0 0 1 16 3.500v8.662a1 1 0 0 1-.629.928l-7.185 2.874a.500.500 0 0 1-.372 0L.630 13.090a1 1 0 0 1-.630-.928V3.500a.500.500 0 0 1 .314-.464z"/></svg>
    <div class="nav" style="top:297.25px;left:70px;letter-spacing:0.54px">Bidhaa</div>
    <svg class="nico" style="top:363px;fill:#10b3d8" viewBox="0 0 16 16"><path d="M1 3a1 1 0 0 1 1-1h12a1 1 0 0 1 1 1zm7 8a2 2 0 1 0 0-4 2 2 0 0 0 0 4"/><path d="M0 5a1 1 0 0 1 1-1h14a1 1 0 0 1 1 1v8a1 1 0 0 1-1 1H1a1 1 0 0 1-1-1zm3 0a2 2 0 0 1-2 2v4a2 2 0 0 1 2 2h10a2 2 0 0 1 2-2V7a2 2 0 0 1-2-2z"/></svg>
    <div class="nav" style="top:363.25px;left:70px;letter-spacing:0.89px">Matumizi</div>
    <svg class="nico" style="top:423.4px;left:33.200px;width:21.600px;height:21.600px;fill:#10b3d8" viewBox="0 0 16 16"><ellipse cx="10.6" cy="3.3" rx="4.6" ry="2.100"/><path d="M6 5.200v.9c0 1.100 2 2.100 4.600 2.100s4.600-1 4.600-2.100v-.9c-.9.900-2.700 1.400-4.600 1.400S6.900 6.100 6 5.200M12.700 9.100c1.500-.3 2.500-1 2.500-1.800v-.9c-.600.600-1.500 1-2.600 1.200z"/><ellipse cx="6.100" cy="8.500" rx="5.500" ry="2.200"/><path d="M.6 10.400v1c0 1.200 2.400 2.200 5.500 2.200s5.500-1 5.500-2.200v-1c-1 .9-3.100 1.500-5.500 1.500S1.600 11.300.6 10.400"/><path d="M.6 13.200v1c0 1.200 2.400 2.200 5.500 2.200s5.500-1 5.500-2.200v-1c-1 .9-3.100 1.500-5.500 1.500s-4.500-.6-5.500-1.500"/></svg>
    <div class="nav" style="top:425.25px;left:70px;letter-spacing:0.62px">Ziada</div>
    <svg class="nico" style="top:487px;fill:#10b3d8" viewBox="0 0 16 16"><path d="M10 13.500a.500.500 0 0 0 .500.500h1a.500.500 0 0 0 .500-.500v-6a.500.500 0 0 0-.500-.500h-1a.500.500 0 0 0-.500.500zm-2.500.500a.500.500 0 0 1-.500-.500v-4a.500.500 0 0 1 .500-.500h1a.500.500 0 0 1 .500.500v4a.500.500 0 0 1-.500.500zm-3 0a.500.500 0 0 1-.500-.500v-2a.500.500 0 0 1 .500-.500h1a.500.500 0 0 1 .500.500v2a.500.500 0 0 1-.500.500z"/><path d="M14 14V4.500L9.500 0H4a2 2 0 0 0-2 2v12a2 2 0 0 0 2 2h8a2 2 0 0 0 2-2M9.500 3A1.500 1.500 0 0 0 11 4.500h2V14a1 1 0 0 1-1 1H4a1 1 0 0 1-1-1V2a1 1 0 0 1 1-1h5.500z"/></svg>
    <div class="nav" style="top:487.25px;left:70px;letter-spacing:0.68px">Report</div>
    <svg class="nico" style="top:553px;fill:#10b3d8" viewBox="0 0 16 16"><path d="M7 14s-1 0-1-1 1-4 5-4 5 3 5 4-1 1-1 1zm4-6a3 3 0 1 0 0-6 3 3 0 0 0 0 6m-5.784 6A2.240 2.240 0 0 1 5 13c0-1.355.680-2.750 1.936-3.720A6.300 6.300 0 0 0 5 9c-4 0-5 3-5 4s1 1 1 1zM4.500 8a2.500 2.500 0 1 0 0-5 2.500 2.500 0 0 0 0 5"/></svg>
    <div class="nav" style="top:553.25px;left:70px;letter-spacing:0.64px">Watumiaji</div>
    <svg class="nico" style="top:619px;fill:#10b3d8" viewBox="0 0 16 16"><path d="M8 4.754a3.246 3.246 0 1 0 0 6.492 3.246 3.246 0 0 0 0-6.492M5.754 8a2.246 2.246 0 1 1 4.492 0 2.246 2.246 0 0 1-4.492 0"/><path d="M9.796 1.343c-.527-1.790-3.065-1.790-3.592 0l-.094.319a.873.873 0 0 1-1.255.520l-.292-.160c-1.640-.892-3.433.902-2.540 2.541l.159.292a.873.873 0 0 1-.520 1.255l-.319.094c-1.790.527-1.790 3.065 0 3.592l.319.094a.873.873 0 0 1 .520 1.255l-.160.292c-.892 1.640.901 3.434 2.541 2.540l.292-.159a.873.873 0 0 1 1.255.520l.094.319c.527 1.790 3.065 1.790 3.592 0l.094-.319a.873.873 0 0 1 1.255-.520l.292.160c1.640.893 3.434-.902 2.540-2.541l-.159-.292a.873.873 0 0 1 .520-1.255l.319-.094c1.790-.527 1.790-3.065 0-3.592l-.319-.094a.873.873 0 0 1-.520-1.255l.160-.292c.893-1.640-.902-3.433-2.541-2.540l-.292.159a.873.873 0 0 1-1.255-.520zm-2.633.283c.246-.835 1.428-.835 1.674 0l.094.319a1.873 1.873 0 0 0 2.693 1.115l.291-.160c.764-.415 1.600.420 1.184 1.185l-.159.292a1.873 1.873 0 0 0 1.116 2.692l.318.094c.835.246.835 1.428 0 1.674l-.319.094a1.873 1.873 0 0 0-1.115 2.693l.160.291c.415.764-.420 1.600-1.185 1.184l-.291-.159a1.873 1.873 0 0 0-2.693 1.116l-.094.318c-.246.835-1.428.835-1.674 0l-.094-.319a1.873 1.873 0 0 0-2.692-1.115l-.292.160c-.764.415-1.600-.420-1.184-1.185l.159-.291A1.873 1.873 0 0 0 1.945 8.930l-.319-.094c-.835-.246-.835-1.428 0-1.674l.319-.094A1.873 1.873 0 0 0 3.060 4.377l-.160-.292c-.415-.764.420-1.600 1.185-1.184l.292.159a1.873 1.873 0 0 0 2.692-1.115z"/></svg>
    <div class="nav" style="top:619.25px;left:70px;letter-spacing:0.70px">Settings</div>
    <div class="nav" style="top:681.25px;left:32px;letter-spacing:0.49px">Bili na Malipo</div>
    <svg class="nico" style="top:762px;fill:#0fa9d6" viewBox="0 0 16 16"><path fill-rule="evenodd" d="M10 12.500a.500.500 0 0 1-.500.500h-8a.500.500 0 0 1-.500-.500v-9a.500.500 0 0 1 .500-.500h8a.500.500 0 0 1 .500.500v2a.500.500 0 0 0 1 0v-2A1.500 1.500 0 0 0 9.500 2h-8A1.500 1.500 0 0 0 0 3.500v9A1.500 1.500 0 0 0 1.500 14h8a1.500 1.500 0 0 0 1.500-1.500v-2a.500.500 0 0 0-1 0z"/><path fill-rule="evenodd" d="M15.854 8.354a.500.500 0 0 0 0-.708l-3-3a.500.500 0 0 0-.708.708L14.293 7.500H5.500a.500.500 0 0 0 0 1h8.793l-2.147 2.146a.500.500 0 0 0 .708.708z"/></svg>
    <div class="nav" style="top:762.25px;left:70px;letter-spacing:0.86px">Logout</div>

  </div>
  <div id="header">
    
    <div class="abs" style="left:20px;top:7px;width:36px;height:36px;border-radius:8px;background:rgba(255,255,255,.1);border:1px solid rgba(255,255,255,.22)"></div>
    <div class="abs" style="left:30px;top:17px;width:15px;height:2px;background:#fff"></div><div class="abs" style="left:30px;top:24px;width:15px;height:2px;background:#fff"></div><div class="abs" style="left:30px;top:30px;width:15px;height:2px;background:#fff"></div>
    <!-- shop select -->
    <svg class="abs" style="left:639.900px;top:16.800px;fill:#07b6d5" width="15" height="13.800" viewBox="0 0 20 18.400"><path d="M2.800 0H16.900L20 5.600v.700a2.500 2.100 0 0 1-5 0a2.500 2.100 0 0 1-5 0a2.500 2.100 0 0 1-5 0a2.500 2.100 0 0 1-5 0V5.600zM2 9.500h2.250v4.700h11.500V9.500H18v7.400a1.500 1.500 0 0 1-1.500 1.500h-13A1.500 1.500 0 0 1 2 16.900z"/></svg>
    <div class="abs" style="left:661px;top:15px;font-size:13.5px;font-weight:700;color:#fff;line-height:20px;white-space:nowrap;letter-spacing:-.31px">Chagua Duka:</div>
    <div class="abs" style="left:759px;top:7px;width:180px;height:36px;border-radius:8px;background:rgba(255,255,255,.1);border:1px solid rgba(255,255,255,.25)"></div>
    <div class="abs" style="left:778px;top:16px;font-size:14px;color:#fff;line-height:20px">test</div>
    <svg class="abs" style="left:924px;top:21px" width="10" height="8" viewBox="0 0 10 8"><path d="M1.200 1.800L5 5.600l3.800-3.800" fill="none" stroke="#fff" stroke-width="1.8" stroke-linecap="round" stroke-linejoin="round"/></svg>
    <!-- bell -->
    <div class="abs" style="left:1522px;top:7px;width:36px;height:36px;border-radius:18px;background:rgba(255,255,255,.08);border:1px solid rgba(255,255,255,.2)"></div>
    <svg class="abs" style="left:1531.400px;top:15.900px" width="17.500" height="16" viewBox="0 0 16 16" preserveAspectRatio="none"><path fill="#12b3d6" d="M8 16a2 2 0 0 0 2-2H6a2 2 0 0 0 2 2m.995-14.901a1 1 0 1 0-1.990 0A5 5 0 0 0 3 6c0 1.098-.500 6-2 7h14c-1.500-1-2-5.902-2-7 0-2.420-1.720-4.440-4.005-4.901"/></svg>
    <div class="abs" style="left:1538px;top:4px;width:23px;height:20px;border-radius:10px;background:linear-gradient(90deg,#ff4263,#ff4b3c);border:2px solid #fff;color:#fff;font-size:12px;font-weight:700;line-height:15px;text-align:center;box-shadow:0 2px 5px rgba(0,0,0,.15)">0</div>
    <!-- user pill -->
    <div class="abs" style="left:1570px;top:0px;width:322px;height:50px;border-radius:25px;background:rgba(255,255,255,.1);border:1px solid rgba(255,255,255,.22)"></div>
    <div class="abs" style="left:1581px;top:9px;width:32px;height:32px;border-radius:16px;border:2px solid #12b5da;background:rgba(255,255,255,.08)"></div>
    <svg class="abs" style="left:1592px;top:16px" width="9.600" height="10.800" viewBox="0 0 16 16" preserveAspectRatio="none"><path d="M6.200 0.600C3 0.600 0.400 2.900 0.400 6v7.200c0 1.400 1.200 2.400 2.600 2.400h3.200z" fill="#1b8ae3"/><path d="M7.400 5.200h2.400v10.400H8.900c-.9 0-1.500-.6-1.500-1.400z" fill="#1b8ae3"/><path d="M7.400 0.600h3.200c2.900 0 5 2.200 5 5v7.600c0 1.400-1 2.400-2.400 2.400H11V5.600c0-.9-.6-1.600-1.500-1.600H7.400z" fill="#3dcb5c"/></svg>
    <div class="abs" style="left:1586.500px;top:29.700px;width:21px;height:1.600px;background:#1c86dc;opacity:.6"></div>
    <div class="abs" style="left:1623.600px;top:14.700px;font-size:15.400px;font-weight:400;-webkit-text-stroke:.3px #fff;color:#fff;line-height:20px;white-space:nowrap;letter-spacing:-.4px">Karibu,</div>
    <div class="abs" style="left:1676px;top:14.700px;font-size:14.800px;font-weight:400;-webkit-text-stroke:.55px #08b8dc;color:#08b8dc;line-height:20px;white-space:nowrap;text-shadow:0 0 10px rgba(6,182,212,.35);letter-spacing:.29px">witusubeth@gmail.com</div>
    <svg class="abs" style="left:1860px;top:16.300px" width="6" height="20" viewBox="0 0 6 20"><circle cx="3" cy="3.500" r="1.600" fill="#fff"/><circle cx="3" cy="10" r="1.600" fill="#fff"/><circle cx="3" cy="16.500" r="1.600" fill="#fff"/></svg>

  </div>
</div>
<div id="scroll"><div id="thumb"></div></div>
</body>
</html>
